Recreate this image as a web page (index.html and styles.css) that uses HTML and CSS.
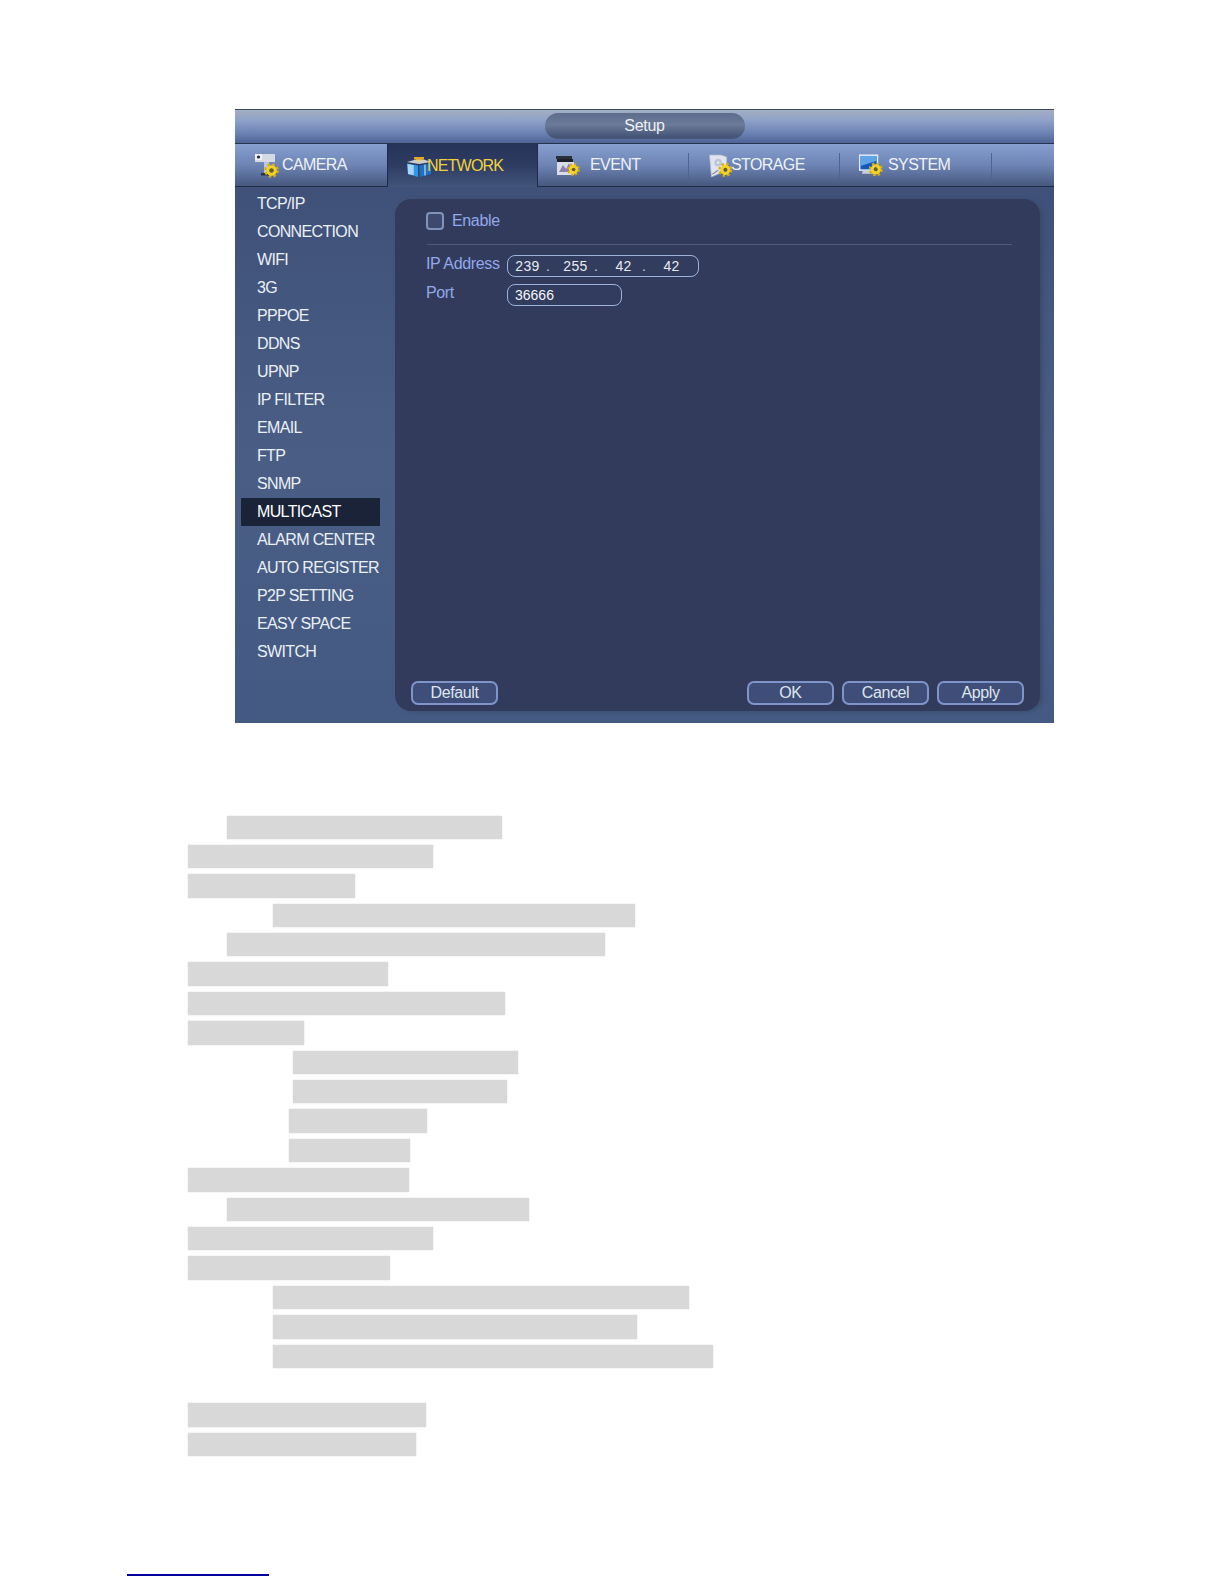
FILE: index.html
```html
<!DOCTYPE html>
<html lang="en">
<head>
<meta charset="utf-8">
<title>Multicast setup</title>
<link rel="stylesheet" href="styles.css">
</head>
<body>
<svg class="defs" width="0" height="0" aria-hidden="true">
  <symbol id="gear" viewBox="0 0 16 16">
    <circle cx="8" cy="8" r="6.300" fill="none" stroke="#d9ab12" stroke-width="3" stroke-dasharray="2.600 2.350"/>
    <circle cx="8" cy="8" r="4" fill="none" stroke="#f5d21e" stroke-width="3.200"/>
    <circle cx="8" cy="8" r="2.200" fill="#6e5a22"/>
  </symbol>
</svg>
<main class="page">
  <section class="dvr">
    <header class="titlebar"><div class="title-pill">Setup</div></header>
    <nav class="tabs">
      <div class="tab tab-camera">
        <svg class="tab-icon" viewBox="0 0 24 24"><path d="M0 0h20v8H0z" fill="#d5dbe4"/><path d="M0 0h7v6H0z" fill="#eef1f5"/><circle cx="3.500" cy="3" r="1.600" fill="#1d2430"/><path d="M9 8h5v12H9z" fill="#b9c6da"/><path d="M6 19h8v2.500H6z" fill="#26324a"/><use href="#gear" x="9" y="9" width="15" height="15"/></svg>
        <span>CAMERA</span>
      </div>
      <div class="tab tab-active tab-network">
        <svg class="tab-icon tab-icon-wide" viewBox="0 0 26 20"><path d="M1 5 10 2.500h8L25 5 13 7z" fill="#c9ccd0"/><path d="M8 0h10v2.500H8z" fill="#e8a51e"/><path d="M10 2.500h7l-3 2h-3z" fill="#f0d060"/><path d="M1 6.500l11 2V20L2 17z" fill="#2f97e6"/><path d="M13 8.500l12-2V17l-11 3z" fill="#1b70c0"/><path d="M1.500 7l5 1v10l-4.500-1z" fill="#a8d4f6"/><path d="M7 8v10M19 7.500v11" stroke="#e4eef8" stroke-width="1"/></svg>
        <span>NETWORK</span>
      </div>
      <div class="tab tab-event">
        <svg class="tab-icon" viewBox="0 0 24 20"><path d="M0 0h16v3H0z" fill="#2a303a"/><path d="M1 3h16v3H1z" fill="#1c2028"/><path d="M1 6h17v13H1z" fill="#d8dde8"/><path d="M3 16l4-7 3 4 3-6 3 9z" fill="#8a7fb0"/><use href="#gear" x="11" y="7" width="13" height="13"/></svg>
        <span>EVENT</span>
      </div>
      <div class="tab tab-storage">
        <svg class="tab-icon" viewBox="0 0 24 25"><path d="M0 1l12 0 6 2v14L2 24z" fill="#dfe5ef" stroke="#aab6c8" stroke-width=".7"/><circle cx="9" cy="9" r="4" fill="#bdc7d6"/><circle cx="9" cy="9" r="1.200" fill="#eef1f6"/><path d="M3 21l6-4" stroke="#7d8ba0" stroke-width="1.200"/><use href="#gear" x="9" y="9" width="15" height="15"/></svg>
        <span>STORAGE</span>
      </div>
      <div class="tab tab-system">
        <svg class="tab-icon" viewBox="0 0 25 24"><rect x="0" y="0" width="20" height="17" fill="#e8eef6"/><path d="M1.500 1.500h17v14h-17z" fill="#1258bd"/><path d="M1.500 1.500h17v5L1.500 12z" fill="#5fa5e6"/><path d="M4 17h13l2 3H3z" fill="#c5ced9"/><use href="#gear" x="10" y="8" width="15" height="15"/></svg>
        <span>SYSTEM</span>
      </div>
      <div class="tab tab-rest"></div>
    </nav>
    <div class="workspace">
      <ul class="side">
        <li>TCP/IP</li><li>CONNECTION</li><li>WIFI</li><li>3G</li><li>PPPOE</li><li>DDNS</li><li>UPNP</li><li>IP FILTER</li><li>EMAIL</li><li>FTP</li><li>SNMP</li>
        <li class="side-on">MULTICAST</li>
        <li>ALARM CENTER</li><li>AUTO REGISTER</li><li>P2P SETTING</li><li>EASY SPACE</li><li>SWITCH</li>
      </ul>
      <div class="panel">
        <div class="enable-row"><span class="check"></span><span class="label">Enable</span></div>
        <hr class="rule">
        <div class="field">
          <span class="label field-label">IP Address</span>
          <div class="input input-ip"><span>239</span><i>.</i><span>255</span><i>.</i><span>42</span><i>.</i><span>42</span></div>
        </div>
        <div class="field">
          <span class="label field-label">Port</span>
          <div class="input input-port">36666</div>
        </div>
        <div class="actions">
          <button class="btn">Default</button>
          <div class="actions-right">
            <button class="btn">OK</button><button class="btn">Cancel</button><button class="btn">Apply</button>
          </div>
        </div>
      </div>
    </div>
  </section>

  <section class="redacted">
    <div class="bar in-1" style="width:275px"></div>
    <div class="bar" style="width:245px"></div>
    <div class="bar" style="width:167px"></div>
    <div class="bar in-2" style="width:362px"></div>
    <div class="bar in-1" style="width:378px"></div>
    <div class="bar" style="width:200px"></div>
    <div class="bar" style="width:317px"></div>
    <div class="bar" style="width:116px"></div>
    <div class="bar in-3" style="width:225px"></div>
    <div class="bar in-3" style="width:214px"></div>
    <div class="bar in-4" style="width:138px"></div>
    <div class="bar in-4" style="width:121px"></div>
    <div class="bar" style="width:221px"></div>
    <div class="bar in-1" style="width:302px"></div>
    <div class="bar" style="width:245px"></div>
    <div class="bar" style="width:202px"></div>
    <div class="bar in-2" style="width:416px"></div>
    <div class="bar in-2" style="width:364px"></div>
    <div class="bar in-2" style="width:440px"></div>
    <div class="bar bar-blank"></div>
    <div class="bar" style="width:238px"></div>
    <div class="bar" style="width:228px"></div>
  </section>
  <div class="footnote-rule"></div>
</main>
</body>
</html>
```
FILE: styles.css
```css
* { box-sizing: border-box; }
html, body { margin: 0; padding: 0; background: #fff; }
body { font-family: "Liberation Sans", Arial, sans-serif; }
.defs { display: block; height: 0; }
.page { width: 1224px; height: 1584px; padding-top: 109px; overflow: hidden; }

.dvr { width: 819px; height: 614px; margin-left: 235px; background: #465a80; display: flex; flex-direction: column; }
.titlebar { height: 35px; display: flex; justify-content: center; padding-top: 3px; border-top: 1px solid #3b4a60; border-bottom: 1px solid #27344f; background: linear-gradient(#a3aec0, #8fa2c8 30%, #6c82b4 70%, #4e6497); }
.title-pill { width: 200px; height: 26px; border-radius: 13px; background: linear-gradient(#5d6d8c, #6a7a97 45%, #465678 90%); color: #eef1f5; font-size: 16px; letter-spacing: -.3px; line-height: 25px; text-align: center; }

.tabs { height: 43px; display: flex; border-bottom: 1px solid #1f2b47; flex: none; background: linear-gradient(#87a0d0, #6d84b4 50%, #46587f); }
.tab { display: flex; align-items: center; color: #eef2f8; font-size: 16px; letter-spacing: -.6px; height: 42px; background: linear-gradient(#4f6590, #4f6590) no-repeat right 9px / 1px 26px; }
.tab-icon { width: 24px; height: 24px; flex: none; margin-top: 2px; }
.tab-icon-wide { width: 26px; height: 20px; }
.tab-camera { width: 152px; padding-left: 20px; gap: 3px; background: none; }
.tab-network { width: 151px; padding-left: 18px; gap: 0; color: #f2d23c; letter-spacing: -.8px; height: 43px; background: linear-gradient(#27345a, #2e3c62 50%, #41547a); border-left: 1px solid #1f2b47; border-right: 1px solid #1f2b47; }
.tab-network span { margin-left: -5px; }
.tab-event { width: 151px; padding-left: 18px; gap: 10px; }
.tab-storage { width: 151px; padding-left: 20px; }
.tab-storage span { margin-left: -2px; }
.tab-system { width: 152px; padding-left: 19px; gap: 5px; }
.tab-rest { flex: 1; background: none; }

.workspace { flex: 1; display: flex; min-height: 0; background: linear-gradient(#3f5178, #4a5e85 50%, #445a82); }
.side { list-style: none; margin: 3px 0 0 6px; padding: 0; width: 161px; flex: none; }
.side li { height: 28px; line-height: 28px; padding-left: 16px; color: #eaf0f6; font-size: 16px; white-space: nowrap; letter-spacing: -.65px; width: 139px; }
.side .side-on { background: #1b2338; color: #fff; }

.panel { width: 645px; margin: 12px 0 12px -7px; border-radius: 16px; background: #323b5c; padding: 12px 16px 0 16px; display: flex; flex-direction: column; box-shadow: 3px 1px 5px -1px #384868; }
.label { color: #93a8ea; font-size: 16px; letter-spacing: -.35px; }
.enable-row { display: flex; align-items: center; gap: 8px; height: 20px; margin-left: 15px; }
.check { width: 18px; height: 18px; border: 2px solid #7f93bd; border-radius: 4px; background: #3d4a6e; }
.rule { height: 1px; border: 0; background: #4c5a7e; margin: 13px 12px 6px 16px; }
.field { display: flex; align-items: center; height: 29px; margin-left: 15px; }
.field-label { width: 81px; position: relative; top: -2px; }
.input { height: 22px; border: 1px solid #9db3dc; border-radius: 8px; background: #323c5e; color: #e6ebf2; font-size: 14px; display: flex; align-items: center; padding-left: 3px; }
.input-ip { width: 192px; letter-spacing: .3px; }
.input-ip span { width: 33px; text-align: center; }
.input-ip i { width: 15px; font-style: normal; text-align: left; padding-left: 2px; color: #c2cad8; }
.input-port { width: 115px; color: #f4f6fa; padding-left: 7px; }

.actions { margin-top: auto; margin-bottom: 6px; display: flex; justify-content: space-between; align-items: center; }
.actions-right { display: flex; gap: 8px; }
.btn { width: 87px; height: 24px; border: 2px solid #7f94c8; border-radius: 7px; background: #3e4e78; color: #dfe5ee; font: 16px "Liberation Sans", Arial, sans-serif; letter-spacing: -.4px; padding: 0; }

.redacted { margin-top: 92.500px; display: flex; flex-direction: column; gap: 6px; padding-left: 188px; }
.bar { height: 23.400px; background: #d8d8d8; box-shadow: 0 0 1.500px #d8d8d8; }
.bar-blank { background: transparent; box-shadow: none; }
.in-1 { margin-left: 39px; }
.in-2 { margin-left: 85px; }
.in-3 { margin-left: 105px; }
.in-4 { margin-left: 101px; }
.footnote-rule { width: 142px; height: 2px; background: #0000a0; margin: 118px 0 0 127px; }
```
